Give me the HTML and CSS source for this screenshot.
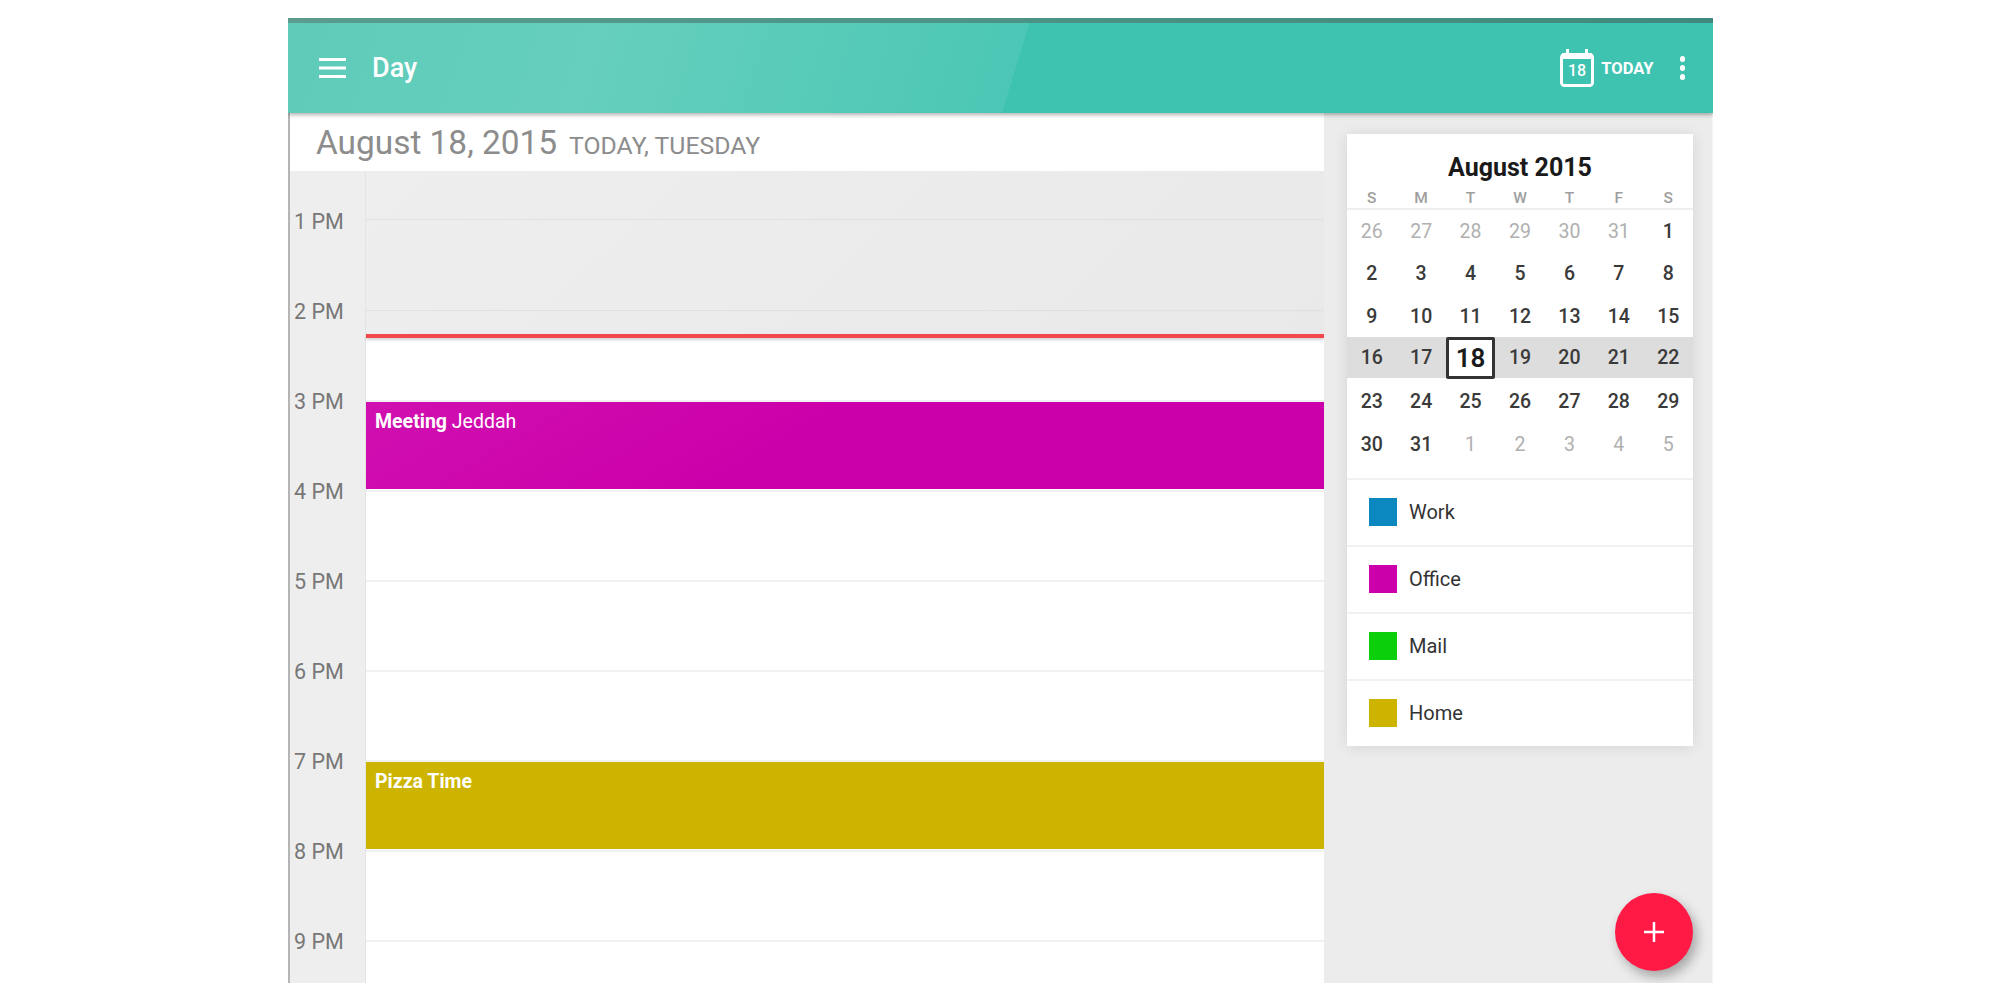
FILE: index.html
```html
<!DOCTYPE html>
<html lang="en">
<head>
    <meta charset="UTF-8">
    <title>Day</title>
    <link rel="stylesheet" href="styles.css">
</head>
<body>
    <div class="app">
        <header class="toolbar">
            <svg class="menu-icon" width="27" height="20" viewBox="0 0 27 20">
                <path d="M0 1.5H27M0 10H27M0 18.5H27" stroke="#fff" stroke-width="3" fill="none"/>
            </svg>
            <div class="toolbar-title">Day</div>
            <svg class="today-icon" width="34" height="38" viewBox="0 0 34 38">
                <rect x="1.5" y="5.5" width="31" height="31" rx="3" fill="none" stroke="#fff" stroke-width="3"/>
                <rect x="1.5" y="4" width="31" height="6" rx="2" fill="#fff"/>
                <rect x="6" y="0" width="3" height="6" fill="#fff"/>
                <rect x="25" y="0" width="3" height="6" fill="#fff"/>
                <text x="17" y="27" class="today-icon-num" text-anchor="middle">18</text>
            </svg>
            <div class="today-label">TODAY</div>
            <div class="more">
                <span></span>
                <span></span>
                <span></span>
            </div>
        </header>

        <div class="content">
            <main class="day-view">
                <div class="date-head">
                    <span class="date-main">August 18, 2015</span>
                    <span class="date-sub">TODAY, TUESDAY</span>
                </div>
                <div class="timeline">
                    <div class="gutter">
                        <div class="hour-label">1 PM</div>
                        <div class="hour-label">2 PM</div>
                        <div class="hour-label">3 PM</div>
                        <div class="hour-label">4 PM</div>
                        <div class="hour-label">5 PM</div>
                        <div class="hour-label">6 PM</div>
                        <div class="hour-label">7 PM</div>
                        <div class="hour-label">8 PM</div>
                        <div class="hour-label">9 PM</div>
                    </div>
                    <div class="slots">
                        <div class="slot first"></div>
                        <div class="slot past"></div>
                        <div class="slot past"></div>
                        <div class="slot">
                            <div class="event meeting"><b>Meeting</b> Jeddah</div>
                        </div>
                        <div class="slot"></div>
                        <div class="slot"></div>
                        <div class="slot"></div>
                        <div class="slot">
                            <div class="event pizza"><b>Pizza Time</b></div>
                        </div>
                        <div class="slot"></div>
                        <div class="slot"></div>
                        <div class="now-line"></div>
                    </div>
                </div>
            </main>

            <aside class="sidebar">
                <div class="card">
                    <div class="month-title">August 2015</div>
                    <div class="week weekdays">
                        <span>S</span><span>M</span><span>T</span><span>W</span><span>T</span><span>F</span><span>S</span>
                    </div>
                    <div class="month">
                        <div class="week">
                            <span class="other">26</span><span class="other">27</span><span class="other">28</span><span class="other">29</span><span class="other">30</span><span class="other">31</span><span>1</span>
                        </div>
                        <div class="week">
                            <span>2</span><span>3</span><span>4</span><span>5</span><span>6</span><span>7</span><span>8</span>
                        </div>
                        <div class="week">
                            <span>9</span><span>10</span><span>11</span><span>12</span><span>13</span><span>14</span><span>15</span>
                        </div>
                        <div class="week current">
                            <span>16</span><span>17</span><span class="today">18</span><span>19</span><span>20</span><span>21</span><span>22</span>
                        </div>
                        <div class="week">
                            <span>23</span><span>24</span><span>25</span><span>26</span><span>27</span><span>28</span><span>29</span>
                        </div>
                        <div class="week">
                            <span>30</span><span>31</span><span class="other">1</span><span class="other">2</span><span class="other">3</span><span class="other">4</span><span class="other">5</span>
                        </div>
                    </div>
                    <div class="legend-row"><span class="swatch work"></span>Work</div>
                    <div class="legend-row"><span class="swatch office"></span>Office</div>
                    <div class="legend-row"><span class="swatch mail"></span>Mail</div>
                    <div class="legend-row"><span class="swatch home"></span>Home</div>
                </div>
                <button class="fab">
                    <svg width="20" height="20" viewBox="0 0 20 20">
                        <path d="M10 0V20M0 10H20" stroke="#fff" stroke-width="2.5" fill="none"/>
                    </svg>
                </button>
            </aside>
        </div>
    </div>
</body>
</html>
```

FILE: styles.css
```css
* {
    box-sizing: border-box;
}

body {
    margin: 0;
    background-color: white;
    font-family: Roboto, "Noto Sans", sans-serif;
}

.app {
    width: 1425px;
    height: 965px;
    margin: 18px 0 0 288px;
    display: flex;
    flex-direction: column;
    overflow: hidden;
}

/* Toolbar */
.toolbar {
    height: 95px;
    flex-shrink: 0;
    display: flex;
    align-items: center;
    padding: 0 28px 0 31px;
    border-top: 5px solid #47907f;
    border-image: linear-gradient(90deg, #5a9c90, #3f8a7e) 1;
    background: linear-gradient(107deg, #5ecbb9 0, #66cfbd 300px, #4cc7b5 709px, #3fc3b1 709px);
    box-shadow: 0 2px 4px rgba(0, 0, 0, 0.3);
    color: white;
    position: relative;
    z-index: 2;
}

.toolbar-title {
    margin-left: 26px;
    font-size: 27px;
    font-weight: 500;
}

.today-icon {
    margin-left: auto;
}

.today-icon-num {
    font-family: Roboto, sans-serif;
    font-size: 16px;
    font-weight: 500;
    fill: white;
}

.today-label {
    margin-left: 7px;
    font-size: 16.5px;
    font-weight: 700;
}

.more {
    margin-left: 26px;
    display: flex;
    flex-direction: column;
    gap: 3.5px;
}

.more span {
    width: 5.5px;
    height: 5.5px;
    border-radius: 50%;
    background-color: white;
}

/* Day view */
.content {
    flex: 1;
    display: flex;
    min-height: 0;
}

.day-view {
    width: 1037px;
    display: flex;
    flex-direction: column;
    border-left: 2px solid #b5b5b5;
}

.date-head {
    height: 58px;
    flex-shrink: 0;
    display: flex;
    align-items: baseline;
    padding: 10px 0 0 26px;
    color: #8c8c8c;
}

.date-main {
    font-size: 33.4px;
}

.date-sub {
    margin-left: 12px;
    font-size: 24.8px;
}

.timeline {
    flex: 1;
    display: flex;
    min-height: 0;
}

.gutter {
    width: 76px;
    flex-shrink: 0;
    padding: 6px 0 0 4px;
    background-color: #eeeeee;
    border-right: 1px solid #e4e4e4;
}

.hour-label {
    height: 90px;
    line-height: 90px;
    font-size: 21.5px;
    color: #777;
}

.slots {
    flex: 1;
    position: relative;
    background: linear-gradient(135deg, #eeeeee, #e9e9e9) no-repeat;
    background-size: 100% 165px;
}

.slot {
    height: 90px;
    border-top: 2px solid #f1f1f1;
}

.slot.first {
    height: 48px;
    border-top: none;
}

.slot.past {
    border-top: 1px solid #e0e0e0;
}

.slot.first + .slot {
    height: 91px;
}

.now-line {
    position: absolute;
    left: 0;
    right: 0;
    top: 163px;
    height: 4px;
    background-color: #f4474c;
    box-shadow: 0 2px 3px rgba(0, 0, 0, 0.18);
}

.event {
    height: 87px;
    padding: 9px 9px;
    font-size: 19.5px;
    line-height: 21px;
    color: white;
}

.event b {
    font-weight: 700;
}

.meeting {
    background: linear-gradient(150deg, #d010b0 0, #cc00aa 240px);
}

.pizza {
    background-color: #ccb400;
}

/* Sidebar */
.sidebar {
    flex: 1;
    position: relative;
    padding: 21px 19px 0 23px;
    background-color: #ececec;
    border-right: 1px solid #f4f4f4;
}

.card {
    width: 346px;
    height: 612px;
    background-color: white;
    box-shadow: 0 1px 14px rgba(0, 0, 0, 0.1);
}

.month-title {
    height: 54px;
    padding-top: 20px;
    line-height: 28px;
    text-align: center;
    font-size: 25px;
    font-weight: 700;
    color: #1a1a1a;
}

.week {
    display: grid;
    grid-template-columns: repeat(7, 1fr);
    height: 42.6px;
    align-items: center;
    justify-items: center;
    font-size: 19.5px;
    font-weight: 500;
    color: #3a3a3a;
}

.week span {
    display: flex;
    align-items: center;
    justify-content: center;
    width: 100%;
    height: 100%;
}

.week.weekdays {
    height: 22px;
    font-size: 15.5px;
    color: #9e9e9e;
    border-bottom: 2px solid #eeeeee;
}

.month {
    padding-bottom: 12px;
}

.week .other {
    font-weight: 400;
    color: #b0b0b0;
}

.week.current {
    height: 41px;
    margin-top: -1px;
    margin-bottom: 2.6px;
    background-color: #dddddd;
}

.week .today {
    height: 42px;
    background-color: white;
    border: 3px solid #333;
    border-radius: 2px;
    font-size: 26px;
    font-weight: 600;
    color: #1a1a1a;
}

.legend-row {
    height: 67px;
    display: flex;
    align-items: center;
    padding-left: 22px;
    border-top: 2px solid #f1f1f1;
    font-size: 20px;
    color: #333;
}

.swatch {
    width: 28px;
    height: 28px;
    margin-right: 12px;
}

.swatch.work {
    background-color: #0c88c0;
}

.swatch.office {
    background-color: #cc00aa;
}

.swatch.mail {
    background-color: #0ccf0c;
}

.swatch.home {
    background-color: #ccb400;
}

.fab {
    position: absolute;
    right: 19px;
    bottom: 12px;
    width: 78px;
    height: 78px;
    padding: 0;
    border: none;
    border-radius: 50%;
    background-color: #ff1a46;
    box-shadow: 4px 6px 12px rgba(0, 0, 0, 0.3);
    display: flex;
    align-items: center;
    justify-content: center;
}
```
